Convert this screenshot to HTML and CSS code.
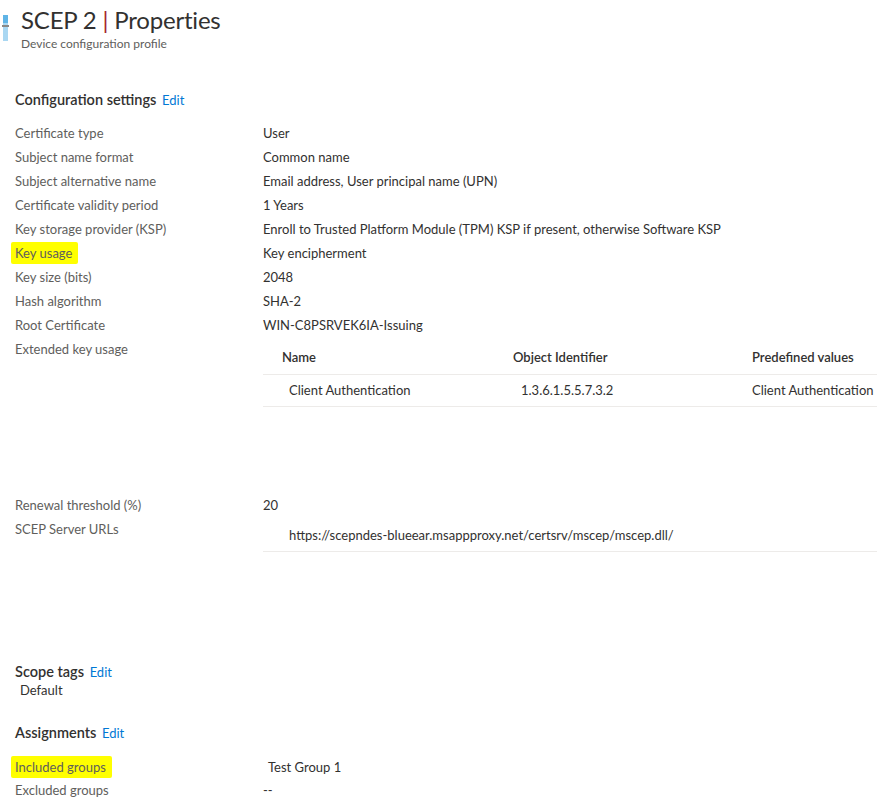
FILE: index.html
```html
<!DOCTYPE html>
<html lang="en">
<head>
    <meta charset="UTF-8">
    <title>SCEP 2 | Properties</title>
    <link rel="stylesheet" href="styles.css">
</head>
<body>
    <div class="header">
        <svg class="header-icon" width="8" height="30" viewBox="0 0 8 30">
            <rect x="2" y="2" width="5" height="26" fill="#a9d7f2"/>
            <rect x="2" y="2" width="5" height="8" fill="#5fb4e6"/>
            <rect x="1" y="12" width="7" height="2" fill="#8a8886"/>
        </svg>
        <div>
            <h1 class="title">SCEP 2 <span class="bar">|</span> Properties</h1>
            <div class="subtitle">Device configuration profile</div>
        </div>
    </div>

    <div class="content">
        <h2 class="section-title">Configuration settings <a class="edit">Edit</a></h2>
        <div class="props">
            <div class="label">Certificate type</div><div class="value">User</div>
            <div class="label">Subject name format</div><div class="value">Common name</div>
            <div class="label">Subject alternative name</div><div class="value">Email address, User principal name (UPN)</div>
            <div class="label">Certificate validity period</div><div class="value">1 Years</div>
            <div class="label">Key storage provider (KSP)</div><div class="value">Enroll to Trusted Platform Module (TPM) KSP if present, otherwise Software KSP</div>
            <div class="label"><span class="mark">Key usage</span></div><div class="value">Key encipherment</div>
            <div class="label">Key size (bits)</div><div class="value">2048</div>
            <div class="label">Hash algorithm</div><div class="value">SHA-2</div>
            <div class="label">Root Certificate</div><div class="value">WIN-C8PSRVEK6IA-Issuing</div>
            <div class="label">Extended key usage</div>
            <div class="value">
                <div class="grid-table eku">
                    <div class="th c1">Name</div>
                    <div class="th c2">Object Identifier</div>
                    <div class="th c3">Predefined values</div>
                    <div class="td c1 in">Client Authentication</div>
                    <div class="td c2 in">1.3.6.1.5.5.7.3.2</div>
                    <div class="td c3">Client Authentication</div>
                </div>
            </div>
            <div class="label">Renewal threshold (%)</div><div class="value">20</div>
            <div class="label">SCEP Server URLs</div>
            <div class="value">
                <div class="url-row">https://scepndes-blueear.msappproxy.net/certsrv/mscep/mscep.dll/</div>
            </div>
        </div>

        <h2 class="section-title scope">Scope tags <a class="edit">Edit</a></h2>
        <div class="tag">Default</div>

        <h2 class="section-title assign">Assignments <a class="edit">Edit</a></h2>
        <div class="props groups">
            <div class="label"><span class="mark wide">Included groups</span></div><div class="value group">Test Group 1</div>
            <div class="label">Excluded groups</div><div class="value">--</div>
        </div>
    </div>
</body>
</html>
```

FILE: styles.css
```css
body {
    margin: 0;
    font-family: "Segoe UI", Lato, "Noto Sans", sans-serif;
    font-size: 13px;
    color: #323130;
    background-color: #fff;
}

.header {
    display: flex;
    align-items: flex-start;
    gap: 12px;
    padding: 6px 0 0 1px;
    height: 68px;
    box-sizing: border-box;
}

.header-icon {
    margin-top: 7px;
}

.title {
    margin: 0;
    font-size: 24px;
    font-weight: 400;
    line-height: 28px;
    letter-spacing: -0.2px;
}

.bar {
    color: #a4262c;
}

.subtitle {
    font-size: 12px;
    color: #605e5c;
    line-height: 16px;
    margin-top: 2px;
}

.content {
    padding: 22px 0 0 15px;
}

.section-title {
    margin: 0;
    font-size: 14.5px;
    font-weight: 600;
    line-height: 20px;
}

.edit {
    color: #0078d4;
    font-weight: 400;
    font-size: 13px;
    margin-left: 2px;
}

.props {
    display: grid;
    grid-template-columns: 248px 1fr;
    margin-top: 11px;
    line-height: 24px;
}

.props.groups {
    margin-top: 13px;
    line-height: 23px;
}

.label {
    color: #605e5c;
}

.mark {
    background-color: #ffff00;
    padding: 3px 6px 3px 4px;
    margin-left: -4px;
    border-radius: 2px;
}

.grid-table {
    display: grid;
    grid-template-columns: 242px 239px 1fr;
    margin-top: 4px;
    margin-bottom: 86px;
}

.th {
    font-weight: 600;
    line-height: 33px;
    border-bottom: 1px solid #edebe9;
    padding-left: 8px;
}

.td {
    line-height: 31px;
    border-bottom: 1px solid #edebe9;
    padding-left: 8px;
    white-space: nowrap;
}

.th.c1 {
    padding-left: 19px;
}

.td.c1 {
    padding-left: 26px;
}

.td.c2 {
    padding-left: 16px;
}

.url-row {
    line-height: 31px;
    padding: 3px 0 0 26px;
    border-bottom: 1px solid #edebe9;
}

.section-title.scope {
    margin-top: 110px;
}

.tag {
    padding-left: 5px;
    line-height: 18px;
    margin-top: -1px;
}

.section-title.assign {
    margin-top: 24px;
}

.group {
    padding-left: 5px;
}
```
